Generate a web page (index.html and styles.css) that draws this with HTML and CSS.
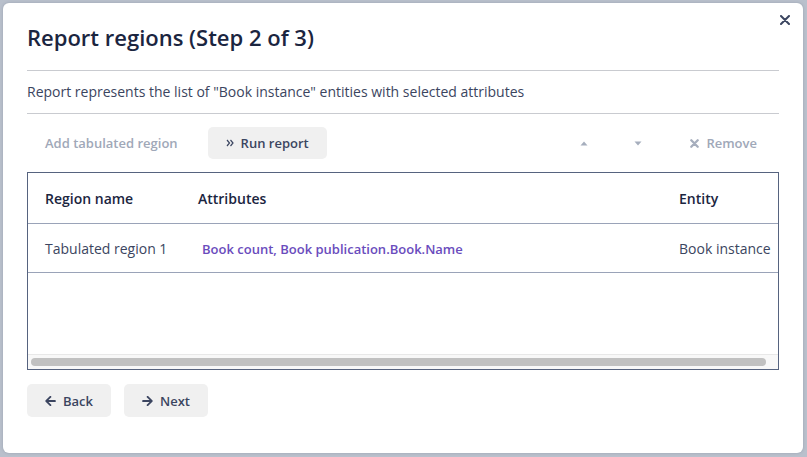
FILE: index.html
```html
<!DOCTYPE html>
<html>
<head>
<meta charset="utf-8">
<link rel="stylesheet" href="styles.css">
</head>
<body>
<div class="modal">
  <button class="close" aria-label="Close">
    <svg width="10" height="10" viewBox="0 0 10 10"><path d="M1 1L9 9M9 1L1 9" stroke="#3b4560" stroke-width="2" stroke-linecap="round"/></svg>
  </button>
  <div class="header"><h1 class="title">Report regions (Step 2 of 3)</h1></div>
  <div class="desc">Report represents the list of "Book instance" entities with selected attributes</div>
  <div class="toolbar">
    <button class="btn btn-flat disabled">Add tabulated region</button>
    <button class="btn btn-gray">
      <svg class="ico" width="8" height="8" viewBox="0 0 8 8"><path d="M1 1L3.5 4L1 7M4.5 1L7 4L4.5 7" fill="none" stroke="#3b4560" stroke-width="1.2"/></svg>
      Run report
    </button>
    <div class="spacer"></div>
    <button class="btn btn-flat disabled icon-only up">
      <svg width="8" height="5" viewBox="0 0 8 5"><path d="M0.5 4.5L4 0.5L7.5 4.5Z" fill="#a6aebd"/></svg>
    </button>
    <button class="btn btn-flat disabled icon-only">
      <svg width="8" height="5" viewBox="0 0 8 5"><path d="M0.5 0.5L4 4.5L7.5 0.5Z" fill="#a6aebd"/></svg>
    </button>
    <button class="btn btn-flat disabled">
      <svg class="ico" width="9" height="9" viewBox="0 0 9 9"><path d="M1.3 1.3L7.7 7.7M7.7 1.3L1.3 7.7" stroke="#a6aebd" stroke-width="2.3" stroke-linecap="round"/></svg>
      Remove
    </button>
  </div>
  <div class="table-wrap">
    <div class="table-view">
      <table class="grid">
        <thead>
          <tr><th class="c1">Region name</th><th class="c2">Attributes</th><th class="c3">Entity</th></tr>
        </thead>
        <tbody>
          <tr><td class="c1">Tabulated region 1</td><td class="c2"><a class="link">Book count, Book publication.Book.Name</a></td><td class="c3">Book instance</td></tr>
        </tbody>
      </table>
    </div>
    <div class="hscroll"><div class="thumb"></div></div>
  </div>
  <div class="footer">
    <button class="btn btn-gray tall">
      <svg class="ico" width="11" height="12" viewBox="0 0 448 512"><path fill="#3b4560" d="M257.5 445.1l-22.2 22.2c-9.4 9.4-24.6 9.4-33.9 0L7 273c-9.4-9.4-9.4-24.6 0-33.9L201.4 44.7c9.4-9.4 24.6-9.4 33.9 0l22.2 22.2c9.5 9.5 9.3 25-.4 34.3L136.6 216H424c13.3 0 24 10.7 24 24v32c0 13.3-10.7 24-24 24H136.6l120.5 114.8c9.8 9.3 10 24.8.4 34.3z"/></svg>
      Back
    </button>
    <button class="btn btn-gray tall">
      <svg class="ico" width="11" height="12" viewBox="0 0 448 512"><path fill="#3b4560" d="M190.5 66.9l22.2-22.2c9.4-9.4 24.6-9.4 33.9 0L441 239c9.4 9.4 9.4 24.6 0 33.9L246.6 467.3c-9.4 9.4-24.6 9.4-33.9 0l-22.2-22.2c-9.5-9.5-9.3-25 .4-34.3L311.4 296H24c-13.3 0-24-10.7-24-24v-32c0-13.3 10.7-24 24-24h287.4L190.9 101.2c-9.8-9.3-10-24.8-.4-34.3z"/></svg>
      Next
    </button>
  </div>
</div>
</body>
</html>
```

FILE: styles.css
```css
* { box-sizing: border-box; }
html, body { margin: 0; padding: 0; }
body {
  background: #b9c0cc;
  font-family: "Open Sans", "Noto Sans", sans-serif;
  width: 807px;
  height: 457px;
  overflow: hidden;
}
.modal {
  position: relative;
  margin: 3px 0 0 3px;
  width: 800px;
  height: 450px;
  background: #fff;
  border-radius: 6px;
  padding: 0 24px;
  box-shadow: 0 0 3px rgba(60, 70, 90, 0.25);
}
.close {
  position: absolute;
  top: 10px;
  right: 11px;
  width: 14px;
  height: 14px;
  padding: 0;
  border: 0;
  background: none;
  display: flex;
  align-items: center;
  justify-content: center;
}
.header {
  padding: 19px 0 18px;
  border-bottom: 1px solid #c9cbd0;
}
.title {
  margin: 0;
  font-size: 22px;
  line-height: 30px;
  font-weight: 600;
  color: #1b2540;
}
.desc {
  padding: 12px 0;
  font-size: 14px;
  line-height: 18px;
  color: #3b4560;
  border-bottom: 1px solid #c9cbd0;
}
.toolbar {
  display: flex;
  align-items: center;
  margin-top: 13px;
  margin-right: 4px;
  gap: 12px;
}
.spacer { flex: 1; }
.btn {
  display: inline-flex;
  align-items: center;
  gap: 7px;
  height: 32px;
  padding: 0 18px;
  border: 0;
  border-radius: 5px;
  font-family: "Open Sans", "Noto Sans", sans-serif;
  font-size: 13px;
  font-weight: 600;
  color: #3b4560;
  background: transparent;
}
.btn-gray { background: #f0f0f0; }
.btn.disabled { color: #a0a8b8; }
.icon-only { padding: 0 18px; }
.icon-only.up { padding: 0 16px 0 20px; }
.tall { height: 33px; }
.ico { flex: none; }
.table-wrap {
  margin-top: 13px;
  height: 198px;
  border: 1px solid #56637f;
  display: flex;
  flex-direction: column;
  overflow: hidden;
}
.table-view {
  flex: 1;
  overflow: hidden;
}
.hscroll {
  height: 15px;
  flex: none;
  background: #f8f8f8;
  border-top: 1px solid #e8e8e8;
  padding: 3px 12px 3px 3px;
}
.thumb {
  height: 8px;
  border-radius: 4px;
  background: #c1c1c1;
}
.grid {
  width: 764px;
  border-collapse: collapse;
  table-layout: fixed;
}
.grid th, .grid td {
  text-align: left;
  padding: 0 0 0 17px;
  white-space: nowrap;
  border-bottom: 1px solid #9aa3b8;
}
.grid th {
  height: 50px;
  padding-top: 2px;
  font-size: 14px;
  font-weight: 600;
  color: #1b2540;
}
.grid td {
  height: 49px;
  padding-top: 1px;
  font-size: 14px;
  color: #3b4560;
}
.c1 { width: 153px; }
.c2 { width: 481px; }
.c3 { width: 130px; }
.link {
  display: inline-block;
  padding-left: 4px;
  font-size: 13px;
  font-weight: 600;
  color: #6a4cbd;
}
.footer {
  display: flex;
  gap: 13px;
  margin-top: 14px;
}
```
